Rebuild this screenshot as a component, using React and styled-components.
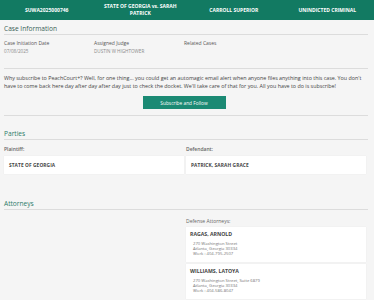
import React from "react";
import styled, { createGlobalStyle } from "styled-components";

const Global = createGlobalStyle`
  html, body { margin: 0; padding: 0; background: #f5f5f5; }
  body { font-family: "Open Sans", "Noto Sans", Arial, sans-serif; color: #444; }
  * { box-sizing: border-box; }
`;

const Header = styled.header`
  display: grid;
  grid-template-columns: repeat(4, 1fr);
  align-items: center;
  height: 20px;
  background: #127a62;
`;

const HeaderCell = styled.div`
  padding: 0 7px;
  text-align: center;
  color: #fff;
  font-weight: 700;
  font-size: 5px;
  line-height: 7px;
`;

const Section = styled.section`
  padding: 0 6px 0 4px;
`;

const SectionTitle = styled.h2`
  margin: ${(p) => p.$mt || 0}px 0 0;
  font-size: 6.6px;
  line-height: 10px;
  font-weight: 400;
  color: ${(p) => p.$color || "#2b7a68"};
  border-bottom: 1px solid #dcdcdc;
`;

const Fields = styled.div`
  display: grid;
  grid-template-columns: 90px 90px 90px;
  padding: 4px 0 13px;
  border-bottom: 1px solid #dcdcdc;
`;

const FieldLabel = styled.div`
  font-size: 5px;
  line-height: 8px;
  color: #555;
`;

const FieldValue = styled.div`
  font-size: 4.6px;
  line-height: 8px;
  color: #8a8a8a;
`;

const Pitch = styled.div`
  padding: 5px 0 6px;
  border-bottom: 1px solid #dcdcdc;
  display: flex;
  flex-direction: column;
  align-items: center;
`;

const PitchText = styled.p`
  margin: 0 0 6px;
  align-self: stretch;
  font-size: 5.35px;
  line-height: 8px;
  color: #444;
`;

const Button = styled.button`
  width: 83px;
  height: 13px;
  border: none;
  padding: 0;
  background: #1b8a74;
  color: #fff;
  font-family: inherit;
  font-size: 4.8px;
  margin-left: -4px;
`;

const Columns = styled.div`
  display: grid;
  grid-template-columns: 1fr 1fr;
  column-gap: 2px;
  margin-right: 2px;
`;

const Column = styled.div`
  display: flex;
  flex-direction: column;
`;

const ColLabel = styled.div`
  margin-top: ${(p) => p.$mt}px;
  margin-bottom: ${(p) => p.$mb}px;
  font-size: 5px;
  line-height: 8px;
  color: #666;
  font-weight: ${(p) => (p.$bold ? 600 : 400)};
`;

const PartyBox = styled.div`
  height: 18px;
  display: flex;
  align-items: center;
  padding-left: 5px;
  background: #fff;
  box-shadow: 0 0 1px rgba(0, 0, 0, 0.08);
  font-size: 4.8px;
  font-weight: 700;
  color: #444;
  text-transform: uppercase;
  letter-spacing: 0.1px;
`;

const AttorneyCard = styled.div`
  background: #fff;
  box-shadow: 0 0 1px rgba(0, 0, 0, 0.08);
  padding: 4px 4px 6px;
  margin-bottom: 2px;
`;

const AttorneyName = styled.div`
  font-size: 5.2px;
  line-height: 7px;
  font-weight: 700;
  color: #444;
  text-transform: uppercase;
  margin-bottom: 3px;
`;

const AddressLine = styled.div`
  margin-left: 3px;
  font-size: 4.2px;
  line-height: 5px;
  color: #777;
`;

const attorneys = [
  {
    name: "Ragas, Arnold",
    lines: ["270 Washington Street", "Atlanta, Georgia 30334", "Work : 404-795-2507"],
  },
  {
    name: "Williams, Latoya",
    lines: ["270 Washington Street, Suite 6879", "Atlanta, Georgia 30334", "Work : 404-586-8047"],
  },
];

export default function App() {
  return (
    <>
      <Global />
      <Header>
        <HeaderCell>SUWA2025000746</HeaderCell>
        <HeaderCell>STATE OF GEORGIA vs. SARAH PATRICK</HeaderCell>
        <HeaderCell>CARROLL SUPERIOR</HeaderCell>
        <HeaderCell>UNINDICTED CRIMINAL</HeaderCell>
      </Header>

      <Section>
        <SectionTitle $mt={4} $color="#3a5f56">Case Information</SectionTitle>
        <Fields>
          <div>
            <FieldLabel>Case Initiation Date</FieldLabel>
            <FieldValue>07/08/2025</FieldValue>
          </div>
          <div>
            <FieldLabel>Assigned Judge</FieldLabel>
            <FieldValue>DUSTIN W HIGHTOWER</FieldValue>
          </div>
          <div>
            <FieldLabel>Related Cases</FieldLabel>
          </div>
        </Fields>
        <Pitch>
          <PitchText>
            Why subscribe to PeachCourt+? Well, for one thing... you could get an automagic email alert when anyone files anything into this case. You don't have to come back here day after day after day just to check the docket. We'll take care of that for you. All you have to do is subscribe!
          </PitchText>
          <Button>Subscribe and Follow</Button>
        </Pitch>
      </Section>

      <Section>
        <SectionTitle $mt={13}>Parties</SectionTitle>
        <Columns>
          <Column>
            <ColLabel $mt={5} $mb={3} $bold>Plaintiff:</ColLabel>
            <PartyBox>State of Georgia</PartyBox>
          </Column>
          <Column>
            <ColLabel $mt={5} $mb={3} $bold>Defendant:</ColLabel>
            <PartyBox>Patrick, Sarah Grace</PartyBox>
          </Column>
        </Columns>
      </Section>

      <Section>
        <SectionTitle $mt={25}>Attorneys</SectionTitle>
        <Columns>
          <Column />
          <Column>
            <ColLabel $mt={7} $mb={2}>Defense Attorneys:</ColLabel>
            {attorneys.map((a) => (
              <AttorneyCard key={a.name}>
                <AttorneyName>{a.name}</AttorneyName>
                {a.lines.map((l) => (
                  <AddressLine key={l}>{l}</AddressLine>
                ))}
              </AttorneyCard>
            ))}
          </Column>
        </Columns>
      </Section>
    </>
  );
}
